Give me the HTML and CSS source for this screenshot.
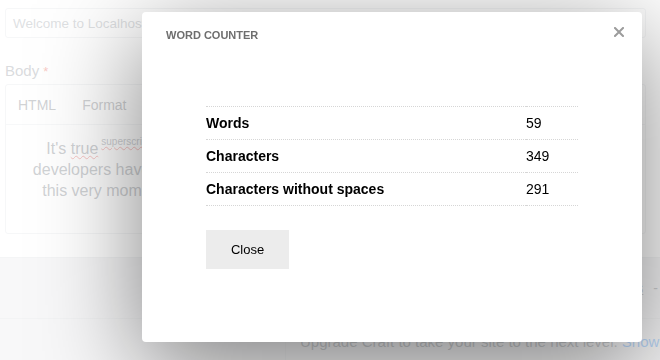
FILE: index.html
```html
<!DOCTYPE html>
<html lang="en">

<head>
    <meta charset="UTF-8" />
    <title>Word Counter</title>
    <link rel="stylesheet" href="styles.css">
</head>

<body>
    <div class="page">
        <div class="content">
            <div class="text-input">Welcome to Localhost</div>

            <div class="field">
                <label class="field-label">Body <span class="required">*</span></label>
                <div class="editor">
                    <div class="toolbar">
                        <span>HTML</span>
                        <span>Format</span>
                    </div>
                    <div class="editor-body">
                        <p>It's <span class="misspelt">true</span><sup class="misspelt">superscript</sup> that in the past several years a lot of all new web designers and</p>
                        <p>developers have been showing up on the scene, and many of them right at this the</p>
                        <p>this very moment are reading this very sentence inside the Craft editor right now</p>
                    </div>
                </div>
            </div>
        </div>

        <div class="lower">
            <div class="meta-row">
                <span class="meta-link">Notes</span> <span class="meta-dash">-</span>
            </div>
            <div class="upgrade">
                <div class="upgrade-side"></div>
                <p class="upgrade-text">Upgrade Craft to take your site to the next level. <a href="#">Show me</a></p>
            </div>
        </div>
    </div>

    <div class="shade"></div>

    <div class="modal">
        <div class="modal-header">
            <h2>Word Counter</h2>
            <button class="modal-x" title="Close">
                <svg width="10" height="10" viewBox="0 0 10 10">
                    <path d="M1 1 L9 9 M9 1 L1 9" stroke="#9c9c9c" stroke-width="2" stroke-linecap="square" />
                </svg>
            </button>
        </div>
        <div class="modal-body">
            <table class="counts">
                <tr>
                    <th>Words</th>
                    <td>59</td>
                </tr>
                <tr>
                    <th>Characters</th>
                    <td>349</td>
                </tr>
                <tr>
                    <th>Characters without spaces</th>
                    <td>291</td>
                </tr>
            </table>
            <button class="btn">Close</button>
        </div>
    </div>
</body>

</html>
```

FILE: styles.css
```css
body {
    font-family: 'Liberation Sans', Arial, sans-serif;
    margin: 0;
    padding: 0;
    color: #29323d;
    background: #fff;
    height: 360px;
    overflow: hidden;
}

/* ---- page behind the modal ---- */

.page {
    height: 360px;
    display: flex;
    flex-direction: column;
}

.content {
    padding: 8px 14px 23px 5px;
    background: #fff;
}

.text-input {
    height: 28px;
    line-height: 30px;
    padding: 0 7px;
    border: 1px solid #dde1e4;
    border-radius: 3px;
    font-size: 13.5px;
    color: #8a9098;
}

.field {
    margin-top: 24px;
}

.field-label {
    display: block;
    font-size: 15px;
    color: #7a8088;
    margin-bottom: 5px;
}

.required {
    color: #e5422b;
    font-size: 13px;
}

.editor {
    border: 1px solid #dde1e4;
    border-radius: 3px;
    height: 148px;
}

.toolbar {
    display: flex;
    gap: 26px;
    padding: 0 12px;
    height: 39px;
    align-items: center;
    border-bottom: 1px solid #e3e6e8;
    font-size: 14px;
    color: #5a6068;
}

.editor-body {
    text-align: center;
    font-size: 16px;
    color: #58606a;
    padding-top: 13px;
}

.editor-body p {
    margin: 0;
    line-height: 21px;
    white-space: nowrap;
}

.editor-body sup {
    font-size: 10px;
    vertical-align: 9px;
    line-height: 0;
    margin-left: 3px;
}

.misspelt {
    text-decoration: underline wavy #e0302a;
    text-decoration-thickness: 1px;
}

.lower {
    flex: 1;
    background: #e4e7ea;
    border-top: 1px solid #d8dbde;
    display: flex;
    flex-direction: column;
}

.meta-row {
    height: 60px;
    display: flex;
    align-items: center;
    justify-content: flex-end;
    gap: 10px;
    padding-right: 2px;
    border-bottom: 1px solid #d2d6da;
    font-size: 14px;
    color: #5a6068;
}

.meta-link {
    text-decoration: underline;
}

.upgrade {
    flex: 1;
    display: flex;
}

.upgrade-side {
    width: 285px;
    flex-shrink: 0;
    border-right: 1px solid #d2d6da;
}

.upgrade-text {
    margin: 14px 0 0 14px;
    font-size: 15px;
    white-space: nowrap;
    color: #58606a;
}

.upgrade-text a {
    color: #0d78f2;
    text-decoration: none;
}

/* ---- modal ---- */

.shade {
    position: fixed;
    inset: 0;
    background: rgba(255, 255, 255, 0.72);
}

.modal {
    position: absolute;
    left: 142px;
    top: 12px;
    width: 500px;
    height: 330px;
    background: #fff;
    border-radius: 4px;
    box-shadow: 0 25px 100px rgba(0, 0, 0, 0.5);
    color: #000;
}

.modal-header {
    display: flex;
    justify-content: space-between;
    align-items: flex-start;
    padding: 17px 18px 0 24px;
}

.modal-header h2 {
    margin: 0;
    font-size: 11px;
    line-height: 13px;
    font-weight: 700;
    text-transform: uppercase;
    color: #6e6e6e;
}

.modal-x {
    background: none;
    border: none;
    padding: 0;
    margin-top: -2px;
    cursor: pointer;
    line-height: 0;
}

.modal-body {
    padding: 64px 64px 0;
}

.counts {
    width: 100%;
    border-collapse: collapse;
    font-size: 14px;
    border-top: 1px dotted #d6d6d6;
}

.counts tr {
    border-bottom: 1px dotted #d6d6d6;
}

.counts th {
    text-align: left;
    font-weight: 700;
    width: 320px;
    padding: 0;
    height: 32px;
}

.counts td {
    padding: 0;
}

.btn {
    margin-top: 24px;
    font-family: inherit;
    font-size: 13px;
    color: #000;
    background: #ececec;
    border: none;
    padding: 0 24px;
    width: 83px;
    height: 39px;
    cursor: pointer;
}
```
